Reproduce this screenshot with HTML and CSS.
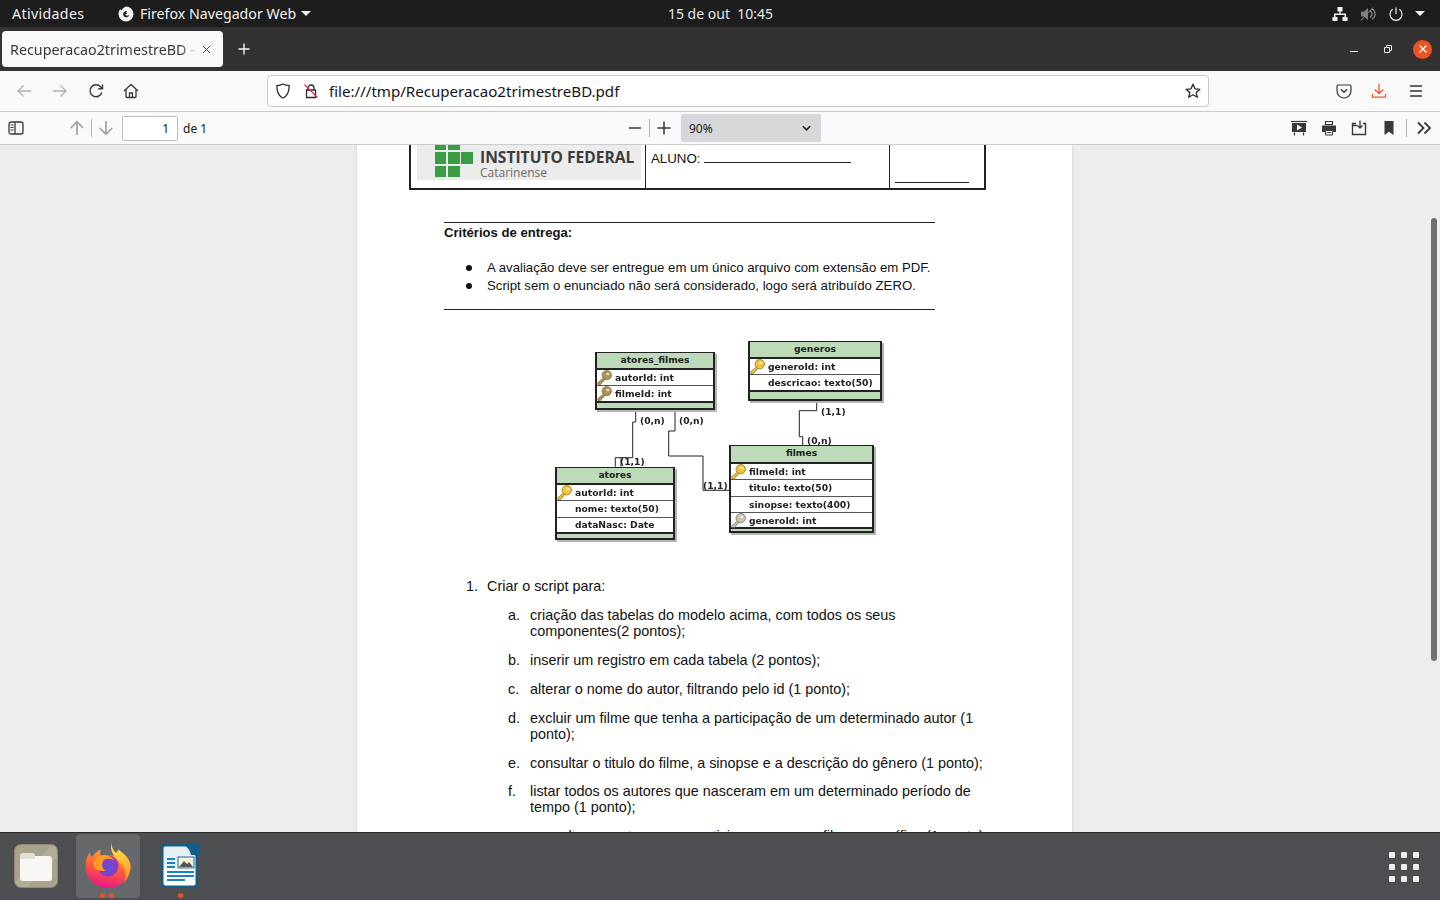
FILE: index.html
```html
<!DOCTYPE html>
<html lang="pt-BR">
<head>
<meta charset="utf-8">
<title>Recuperacao2trimestreBD</title>
<link rel="stylesheet" href="styles.css">
</head>
<body>
<svg class="defs" width="0" height="0" aria-hidden="true">
  <symbol id="key" viewBox="0 0 16 16">
    <path d="M7 8.500 .9 13.300v2.200h3l1-1.200.2-1.300 1.400-.2.3-1.400 2.300-1.300z" fill="currentColor" stroke="#6f5a1c" stroke-width=".6"/>
    <circle cx="10.400" cy="5.500" r="5" fill="currentColor" stroke="#8a7020" stroke-width=".8"/>
    <ellipse cx="11.600" cy="4.300" rx="1.800" ry="1.400" fill="#fff" opacity=".7"/>
  </symbol>
</svg>

<header class="topbar">
  <span class="activities">Atividades</span>
  <span class="appmenu">
    <svg class="ico-app" viewBox="0 0 16 16"><path d="M8 .5a7.500 7.500 0 1 1-7.500 7.500C.5 6 1.300 4.300 2.500 3c0 .8.3 1.300.8 1.600C4.200 2.800 5.800 1.200 8 .5zM8.800 5C7 4.800 5.200 6.200 5.200 8.200c0 1.700 1.400 3 3.100 3 1.500 0 2.700-1 3-2.400-.6.600-1.400 1-2.300.8-.9-.1-1.600-.8-1.700-1.700.7.300 1.400.3 2-.1C8.800 7.500 8.200 7 8.200 6.500c.1-.6.400-1 .6-1.500z" fill="#f2f2f2" fill-rule="evenodd"/></svg>
    <span>Firefox Navegador Web</span>
    <i class="caret"></i>
  </span>
  <time class="clock">15 de out&nbsp;&nbsp;10:45</time>
  <span class="tray">
    <svg class="ico-tray" viewBox="0 0 16 16"><path d="M5.500 1h5v4.500H8.700v2H14V11h1.500v4h-5v-4h2V9h-9v2h2v4h-5v-4H2V7.500h5.300v-2H5.500z" fill="#f2f2f2"/></svg>
    <svg class="ico-tray" viewBox="0 0 16 16"><path d="M1 5.500h3L8 2v12l-4-3.500H1z" fill="#7d7d7d"/><path d="M10 4.500c1.300 1 2 2.200 2 3.500s-.7 2.500-2 3.500M12 2.800C14 4 15 6 15 8s-1 4-3 5.200" fill="none" stroke="#8b8b8b" stroke-width="1.200"/><path d="M1 14.500 13 1.500" stroke="#8b8b8b" stroke-width="1"/></svg>
    <svg class="ico-tray" viewBox="0 0 16 16"><path d="M8 1.500v6.500M4.700 3.300a6 6 0 1 0 6.600 0" fill="none" stroke="#f2f2f2" stroke-width="1.200"/></svg>
    <i class="caret"></i>
  </span>
</header>

<div class="tabstrip">
  <div class="tab">
    <span class="tab-title">Recuperacao2trimestreBD - PDF.js</span>
    <svg class="tab-close" viewBox="0 0 10 10"><path d="M1 1l8 8M9 1l-8 8" stroke="#333" stroke-width="1"/></svg>
  </div>
  <svg class="newtab" viewBox="0 0 12 12"><path d="M6 .5v11M.5 6h11" stroke="#f4f4f4" stroke-width="1.400"/></svg>
  <div class="winctl">
    <svg class="win-min" viewBox="0 0 10 10"><path d="M1 7.500h8" stroke="#eee" stroke-width="1"/></svg>
    <svg class="win-max" viewBox="0 0 10 10"><path d="M1.500 3.500h5v5h-5zM3.500 3V1.500h5v5H7" fill="none" stroke="#eee" stroke-width="1"/></svg>
    <span class="win-close"><svg viewBox="0 0 10 10"><path d="M1.500 1.500l7 7M8.500 1.500l-7 7" stroke="#fff" stroke-width="1.300"/></svg></span>
  </div>
</div>

<nav class="navbar">
  <svg class="nav-ico nav-back" viewBox="0 0 16 16"><path d="M15 8H2M7.500 2.500 2 8l5.500 5.500" fill="none" stroke="#b1b1b3" stroke-width="1.300"/></svg>
  <svg class="nav-ico nav-next" viewBox="0 0 16 16"><path d="M1 8h13M8.500 2.500 14 8l-5.500 5.500" fill="none" stroke="#b1b1b3" stroke-width="1.300"/></svg>
  <svg class="nav-ico nav-next" viewBox="0 0 16 16"><path d="M13.800 9.500A6 6 0 1 1 12.300 3.500L14 5.500M14.500 1.500v4.200h-4.200" fill="none" stroke="#38383d" stroke-width="1.400"/></svg>
  <svg class="nav-ico nav-home" viewBox="0 0 16 16"><path d="M1 8 8 1.500 15 8M3 6.500v7.300a.7.7 0 0 0 .7.700h8.600a.7.7 0 0 0 .7-.7V6.500M6.500 14.500V10h3v4.500" fill="none" stroke="#38383d" stroke-width="1.300"/></svg>
  <div class="urlbar">
    <svg class="url-shield" viewBox="0 0 16 16"><path d="M8 1c2 1 4.200 1.500 6.200 1.700C14.200 9 12.500 13 8 15 3.500 13 1.800 9 1.800 2.700 3.800 2.500 6 2 8 1z" fill="none" stroke="#2a2a2e" stroke-width="1.300"/></svg>
    <svg class="url-lock" viewBox="0 0 16 16"><path d="M5 7V5a3 3 0 0 1 6 0v2M3.500 7h9v7.500h-9z" fill="none" stroke="#2a2a2e" stroke-width="1.300"/><path d="M1.500 1.500l13 13" stroke="#e22850" stroke-width="1.100"/></svg>
    <span class="url-text">file:///tmp/Recuperacao2trimestreBD.pdf</span>
    <svg class="url-star" viewBox="0 0 16 16"><path d="M8 1.300 10 5.800l4.900.5-3.700 3.200 1.100 4.800L8 11.800l-4.300 2.500 1.100-4.800L1.100 6.300 6 5.800z" fill="none" stroke="#2a2a2e" stroke-width="1.300" stroke-linejoin="round"/></svg>
  </div>
  <svg class="nav-ico nav-pocket" viewBox="0 0 16 16"><path d="M2.200 2h11.600c.7 0 1.200.5 1.200 1.200V8a7 7 0 0 1-14 0V3.200C1 2.500 1.500 2 2.200 2z" fill="none" stroke="#38383d" stroke-width="1.200"/><path d="M4.800 6.300 8 9.300l3.200-3" fill="none" stroke="#38383d" stroke-width="1.400"/></svg>
  <svg class="nav-ico nav-dl" viewBox="0 0 16 16"><path d="M8 1v9.500M3.800 6.500 8 10.700l4.200-4.200M1.500 11v3.200h13V11" fill="none" stroke="#f0562a" stroke-width="1.300"/></svg>
  <svg class="nav-ico nav-menu" viewBox="0 0 16 16"><path d="M2 3h12M2 8h12M2 13h12" stroke="#38383d" stroke-width="1.300"/></svg>
</nav>

<div class="pdfbar">
  <div class="pdf-left">
    <svg class="pdf-ico pdf-side" viewBox="0 0 16 16"><rect x="1" y="2" width="14" height="12" rx="2" fill="none" stroke="#38383d" stroke-width="1.300"/><path d="M7 2v12" stroke="#38383d" stroke-width="1.300"/><path d="M2.500 5h3M2.500 7.500h3M2.500 10h3" stroke="#38383d"/></svg>
    <svg class="pdf-ico pdf-up" viewBox="0 0 16 16"><path d="M8 15V2M1.800 8 8 1.800 14.200 8" fill="none" stroke="#a3a3a5" stroke-width="1.700"/></svg>
    <i class="pdf-sep"></i>
    <svg class="pdf-ico pdf-down" viewBox="0 0 16 16"><path d="M8 1v13M1.800 8 8 14.200 14.200 8" fill="none" stroke="#a3a3a5" stroke-width="1.700"/></svg>
    <span class="pageinput">1</span>
    <span class="pagecount">de 1</span>
  </div>
  <div class="pdf-center">
    <svg class="pdf-ico" viewBox="0 0 16 16"><path d="M2 8h12" stroke="#38383d" stroke-width="1.500"/></svg>
    <i class="pdf-sep"></i>
    <svg class="pdf-ico" viewBox="0 0 16 16"><path d="M1.500 8h13M8 1.500v13" stroke="#38383d" stroke-width="1.500"/></svg>
    <span class="zoomsel"><span>90%</span><svg class="zoom-chev" viewBox="0 0 10 6"><path d="M1 1l4 4 4-4" fill="none" stroke="#222" stroke-width="1.800"/></svg></span>
  </div>
  <div class="pdf-right">
    <svg class="pdf-ico" viewBox="0 0 16 16"><path d="M0 1.500h16" stroke="#38383d" stroke-width="1.200"/><path d="M1 3h14v9H1z" fill="#38383d"/><path d="M6 4.500l5 3-5 3z" fill="#f9f9fa"/><path d="M3.500 12.500v3M12.500 12.500v3" stroke="#38383d" stroke-width="1.200"/></svg>
    <svg class="pdf-ico" viewBox="0 0 16 16"><path d="M4.500 1.500h7v3h-7z" fill="none" stroke="#38383d" stroke-width="1.200"/><path d="M1 5.500h14V12h-3v-2H4v2H1z" fill="#38383d"/><path d="M4.500 10.500h7v4.500h-7z" fill="#f9f9fa" stroke="#38383d"/><path d="M6 12.500h4" stroke="#38383d"/></svg>
    <svg class="pdf-ico" viewBox="0 0 16 16"><path d="M5 3.500H1.500v11h13v-11H12M1.500 5.500H6" fill="none" stroke="#38383d" stroke-width="1.400"/><path d="M9 .5v7.500M6.500 5.500 9 8l2.500-2.500" fill="none" stroke="#38383d" stroke-width="1.300"/></svg>
    <svg class="pdf-ico" viewBox="0 0 16 16"><path d="M3.500 1h9v14L8 11.800 3.500 15z" fill="#38383d"/></svg>
    <i class="pdf-sep pdf-sep-r"></i>
    <svg class="pdf-ico pdf-more" viewBox="0 0 16 16"><path d="M2 2.500 7.500 8 2 13.500M8.500 2.500 14 8l-5.500 5.500" fill="none" stroke="#38383d" stroke-width="1.800"/></svg>
  </div>
</div>

<main class="viewer">
  <article class="paper">
    <div class="doc-head">
      <div class="cell-logo">
        <div class="logo">
          <div class="logo-mark">
            <i class="sq"></i><i class="sq"></i><i class="sq-gap"></i>
            <i class="sq"></i><i class="sq"></i><i class="sq"></i>
            <i class="sq"></i><i class="sq"></i>
          </div>
          <div class="logo-text">
            <strong>INSTITUTO FEDERAL</strong>
            <span>Catarinense</span>
          </div>
        </div>
      </div>
      <div class="cell-name">ALUNO: <i class="blank"></i></div>
      <div class="cell-grade"><i></i></div>
    </div>

    <section class="criteria">
      <h2>Critérios de entrega:</h2>
      <ul>
        <li>A avaliação deve ser entregue em um único arquivo com extensão em PDF.</li>
        <li>Script sem o enunciado não será considerado, logo será atribuído ZERO.</li>
      </ul>
    </section>

    <div class="diagram">
      <svg class="wires" viewBox="0 0 715 265">
        <path d="M278.700 101V112H275.700V147.700H258.300V156.700M264 147.700V156.700"/>
        <path d="M318 101V121H311.700V146H346V180.300H373"/>
        <path d="M459.700 93V100.700H442.300V126.700H445.700V135.700"/>
      </svg>

      <div class="er er-af">
        <div class="er-head">atores_filmes</div>
        <div class="er-row"><svg class="k k-fk"><use href="#key"/></svg>autorId: int</div>
        <div class="er-row"><svg class="k k-fk"><use href="#key"/></svg>filmeId: int</div>
        <div class="er-foot"></div>
      </div>
      <div class="er er-ge">
        <div class="er-head">generos</div>
        <div class="er-row"><svg class="k k-pk"><use href="#key"/></svg>generoId: int</div>
        <div class="er-row"><svg class="k"></svg>descricao: texto(50)</div>
        <div class="er-foot"></div>
      </div>
      <div class="er er-at">
        <div class="er-head">atores</div>
        <div class="er-row"><svg class="k k-pk"><use href="#key"/></svg>autorId: int</div>
        <div class="er-row"><svg class="k"></svg>nome: texto(50)</div>
        <div class="er-row"><svg class="k"></svg>dataNasc: Date</div>
        <div class="er-foot"></div>
      </div>
      <div class="er er-fi">
        <div class="er-head">filmes</div>
        <div class="er-row"><svg class="k k-pk"><use href="#key"/></svg>filmeId: int</div>
        <div class="er-row"><svg class="k"></svg>titulo: texto(50)</div>
        <div class="er-row"><svg class="k"></svg>sinopse: texto(400)</div>
        <div class="er-row"><svg class="k k-gr"><use href="#key"/></svg>generoId: int</div>
        <div class="er-foot"></div>
      </div>

      <span class="card c1">(0,n)</span>
      <span class="card c2">(0,n)</span>
      <span class="card c3">(1,1)</span>
      <span class="card c4">(0,n)</span>
      <span class="card c5">(1,1)</span>
      <span class="card c6">(1,1)</span>
    </div>

    <div class="tasks">
      <div class="task-main"><span class="m1">1.</span><span>Criar o script para:</span></div>
      <ol class="sub">
        <li><span class="m2">a.</span><span>criação das tabelas do modelo acima, com todos os seus<br>componentes(2 pontos);</span></li>
        <li><span class="m2">b.</span><span>inserir um registro em cada tabela (2 pontos);</span></li>
        <li><span class="m2">c.</span><span>alterar o nome do autor, filtrando pelo id (1 ponto);</span></li>
        <li><span class="m2">d.</span><span>excluir um filme que tenha a participação de um determinado autor (1<br>ponto);</span></li>
        <li><span class="m2">e.</span><span>consultar o titulo do filme, a sinopse e a descrição do gênero (1 ponto);</span></li>
        <li><span class="m2">f.</span><span>listar todos os autores que nasceram em um determinado período de<br>tempo (1 ponto);</span></li>
        <li><span class="m2">g.</span><span>consultar os autores que participaram em um filme específico (1 ponto);</span></li>
      </ol>
    </div>
  </article>
  <div class="scrollthumb"></div>
</main>

<footer class="dock">
  <div class="dock-slot">
    <span class="files-tile"><i class="folder"></i></span>
  </div>
  <div class="dock-slot dock-active">
    <svg class="dock-ff" viewBox="0 0 46 46">
      <defs>
        <linearGradient id="ffa" x1="0.700" y1="0" x2="0.400" y2="1"><stop offset="0" stop-color="#ffb02e"/><stop offset=".5" stop-color="#ff5f36"/><stop offset="1" stop-color="#e8158c"/></linearGradient>
        <linearGradient id="ffb" x1="0.400" y1="0" x2="0.600" y2="1"><stop offset="0" stop-color="#ffe94d"/><stop offset="1" stop-color="#ff9320"/></linearGradient>
        <radialGradient id="ffc" cx=".55" cy=".6" r=".6"><stop offset="0" stop-color="#5a55d8"/><stop offset="1" stop-color="#a32ec4"/></radialGradient>
      </defs>
      <path d="M23 46C10.500 46 .5 36.500.5 24.500.5 19 2 14 4.500 10.500c.5 2.500 1.500 3.800 3 4.500 1.500-3 4.500-6 8.500-7.500-1 2.500-1 4.500 0 6h13c8 0 16.500 2 16.500 10.500C45.500 36.500 35.500 46 23 46z" fill="url(#ffa)"/>
      <path d="M27 0c-1 4 .5 7 2.500 9.500 1.500 2 3.500.5 3.500-2 6 4 12.500 9 12.500 17.500 0 6-2.500 11-6.500 15 2-5 2.500-11-1-16C33.500 17 23 12 27 0z" fill="url(#ffb)"/>
      <circle cx="23" cy="24" r="10.500" fill="url(#ffc)"/>
      <path d="M8 22c1-5 6.500-9.500 12-9 4 .4 7 2 9.500 5-3.500-1.500-8-1.800-10.500 0-3 3-2.500 8.500 2 11-7 .5-12-1.500-13-7z" fill="#ff9a24"/>
    </svg>
    <i class="run-dot"></i><i class="run-dot"></i>
  </div>
  <div class="dock-slot">
    <svg class="dock-lo" viewBox="0 0 38 46">
      <path d="M3.500 1H26l11 11v29.500a3.500 3.500 0 0 1-3.500 3.500h-30A3.500 3.500 0 0 1 0 41.500v-37A3.500 3.500 0 0 1 3.500 1z" fill="#125e88"/>
      <path d="M4 3.500h21l9.500 9.500v12H2.500V5A1.500 1.500 0 0 1 4 3.500z" fill="#e6f0f6"/>
      <path d="M2.500 25h32v15.500a2 2 0 0 1-2 2H4.500a2 2 0 0 1-2-2z" fill="#fff"/>
      <path d="M26 0h12v12H30z" fill="#125e88"/>
      <path d="M6 15h8v2H6zM6 19h8v2H6zM6 23h8v2H6zM6 28h27v2H6zM6 32h27v2H6zM6 36h18v2H6z" fill="#1a82bd"/>
      <rect x="17" y="14" width="16" height="11" fill="#f6f3d6" stroke="#1a6a98"/>
      <path d="M18 24l5-6 3 3 2-2 4 5z" fill="#555"/>
    </svg>
    <i class="run-dot"></i>
  </div>
  <div class="appgrid">
    <i></i><i></i><i></i><i></i><i></i><i></i><i></i><i></i><i></i>
  </div>
</footer>
</body>
</html>
```

FILE: styles.css
```css
* { box-sizing: border-box; }
html, body { margin: 0; height: 100%; }
body {
  width: 1440px;
  height: 900px;
  overflow: hidden;
  display: flex;
  flex-direction: column;
  font-family: "Noto Sans", "Open Sans", sans-serif;
  background: #ededf0;
}
.defs { position: absolute; }

/* GNOME top bar */
.topbar {
  height: 27px;
  flex: none;
  background: #1d1d1d;
  color: #f0f0f0;
  font-size: 14.200px;
  display: flex;
  align-items: center;
  padding-left: 12px;
}
.activities { width: 106px; letter-spacing: .35px; }
.appmenu { display: flex; align-items: center; width: 490px; }
.ico-app { width: 16px; height: 16px; margin-right: 6px; }
.caret {
  width: 0; height: 0;
  border-left: 5px solid transparent;
  border-right: 5px solid transparent;
  border-top: 5px solid #f2f2f2;
  margin-left: 5px;
}
.clock { width: 225px; font-size: 14px; text-align: center; color: #e6e6e6; }
.tray { margin-left: auto; display: flex; align-items: center; gap: 12px; padding-right: 15px; }
.tray .caret { margin-left: -1px; }
.ico-tray { width: 16px; height: 16px; }

/* Tabs */
.tabstrip {
  height: 44px;
  flex: none;
  background: #333131;
  display: flex;
  align-items: center;
  padding-left: 2px;
}
.tab {
  width: 221px;
  height: 36px;
  background: #f9f9fa;
  border-radius: 4px;
  display: flex;
  align-items: center;
  padding-left: 8px;
  font-size: 14.300px;
  color: #38383d;
}
.tab-title {
  width: 188px;
  overflow: hidden;
  white-space: nowrap;
  -webkit-mask-image: linear-gradient(to right, #000 170px, transparent 188px);
  mask-image: linear-gradient(to right, #000 170px, transparent 188px);
}
.tab-close { width: 9px; height: 9px; margin-left: 4px; }
.newtab { width: 12px; height: 12px; margin-left: 15px; }
.winctl { margin-left: auto; display: flex; align-items: center; padding-right: 8px; }
.win-min { width: 10px; height: 10px; }
.win-max { width: 10px; height: 10px; margin-left: 24px; }
.win-close {
  width: 19px; height: 19px;
  border-radius: 50%;
  background: #e95420;
  margin-left: 20px;
  display: flex; align-items: center; justify-content: center;
}
.win-close svg { width: 10px; height: 10px; }

/* Navigation */
.navbar {
  height: 41px;
  flex: none;
  background: #f9f9fa;
  border-bottom: 1px solid #cccccc;
  display: flex;
  align-items: center;
}
.nav-ico { width: 16px; height: 16px; flex: none; }
.nav-back { margin-left: 16px; }
.nav-next { margin-left: 20px; }
.nav-home { margin-left: 19px; }
.urlbar {
  width: 942px;
  height: 32px;
  margin-left: 128px;
  background: #fff;
  border: 1px solid #c8c8c8;
  border-radius: 4px;
  display: flex;
  align-items: center;
  padding: 0 7px;
  font-size: 15.100px;
  color: #15141a;
}
.url-shield { width: 16px; height: 16px; }
.url-lock { width: 16px; height: 16px; margin-left: 12px; }
.url-text { margin-left: 10px; }
.url-star { width: 16px; height: 16px; margin-left: auto; }
.nav-pocket { margin-left: 127px; }
.nav-dl { margin-left: 19px; }
.nav-menu { margin-left: 21px; }

/* PDF toolbar */
.pdfbar {
  height: 33px;
  flex: none;
  background: #f9f9fa;
  border-bottom: 1px solid #cccccc;
  display: flex;
  align-items: center;
  font-size: 12px;
  color: #18181a;
}
.pdf-ico { width: 16px; height: 16px; flex: none; }
.pdf-sep { width: 1px; height: 18px; background: #b8b8ba; flex: none; }
.pdf-left { width: 627px; display: flex; align-items: center; }
.pdf-side { margin-left: 8px; }
.pdf-up { margin-left: 45px; margin-right: 6px; }
.pdf-down { margin-left: 6px; }
.pageinput {
  width: 56px; height: 25px;
  margin-left: 8px;
  background: #fff;
  border: 1px solid #bdbdbd;
  border-radius: 2px;
  text-align: right;
  padding-right: 8px;
  line-height: 24px;
}
.pagecount { margin-left: 5px; }
.pdf-center { display: flex; align-items: center; gap: 6px; }
.zoomsel {
  width: 140px; height: 28px;
  margin-left: 3px;
  background: #d7d7db;
  border-radius: 2px;
  display: flex;
  align-items: center;
  justify-content: space-between;
  padding: 0 10px 0 8px;
}
.zoom-chev { width: 9px; height: 6px; }
.pdf-right { margin-left: auto; display: flex; align-items: center; gap: 14px; padding-right: 8px; }
.pdf-sep-r { margin-left: -5px; margin-right: -5px; }

/* Viewer */
.viewer {
  flex: 1;
  min-height: 0;
  overflow: hidden;
  position: relative;
  background: #ededf0;
  display: flex;
  justify-content: center;
  padding-right: 11px;
}
.scrollthumb {
  position: absolute;
  left: 1431px; top: 73px;
  width: 6px; height: 443px;
  border-radius: 3px;
  background: #707074;
}
.paper {
  width: 715px;
  height: 1000px;
  flex: none;
  background: #fff;
  box-shadow: 0 0 4px rgba(0,0,0,.12);
  font-family: "Liberation Sans", Arial, sans-serif;
  font-size: 13.200px;
  line-height: 16px;
  color: #111;
}

.doc-head {
  margin-left: 52px;
  width: 577px;
  height: 45px;
  border: solid #222;
  border-width: 0 2px 2px;
  display: flex;
}
.cell-logo { width: 234px; padding-left: 6px; }
.logo {
  width: 224px; height: 35px;
  background: #ececec;
  display: flex;
}
.logo-mark {
  width: 38px;
  flex: none;
  margin-left: 18px;
  margin-right: 7px;
  display: grid;
  grid-template-columns: 11px 12px 12px;
  grid-template-rows: 5px 11.500px 11px;
  column-gap: 1.500px;
  row-gap: 2px;
  align-content: start;
}
.sq { background: #3a9c43; }
.logo-text { display: flex; flex-direction: column; padding-top: 4px; color: #3c3c3c; font-family: "Open Sans", sans-serif; white-space: nowrap; }
.logo-text strong { font-size: 15.600px; line-height: 17px; }
.logo-text span { font-size: 12px; line-height: 13px; color: #6a6a6a; }
.cell-name {
  width: 244px;
  border-left: 1px solid #222;
  padding: 6px 0 0 5px;
  font-size: 13.300px;
}
.blank { display: inline-block; width: 147px; height: 11px; border-bottom: 1px solid #222; vertical-align: baseline; }
.cell-grade { flex: 1; border-left: 1px solid #222; display: flex; align-items: flex-end; padding: 0 0 5px 5px; }
.cell-grade i { display: block; width: 74px; border-bottom: 1px solid #222; }

.criteria {
  margin: 32px 0 0 87px;
  width: 491px;
  height: 88px;
  border-top: 1px solid #222;
  border-bottom: 1px solid #222;
}
.criteria h2 { margin: 2px 0 0; font-size: 13.100px; line-height: 16px; font-weight: 700; }
.criteria ul { list-style: none; margin: 19px 0 0; padding: 0 0 0 22px; }
.criteria li { margin-bottom: 2px; display: flex; align-items: center; }
.criteria li::before {
  content: "";
  width: 6px; height: 6px;
  border-radius: 50%;
  background: #111;
  margin-right: 15px;
  flex: none;
}

.diagram { position: relative; height: 268px; }
.wires { position: absolute; left: 0; top: 0; width: 715px; height: 265px; }
.wires path { fill: none; stroke: #222; stroke-width: 1; }

.er {
  position: absolute;
  border: 2px solid #222;
  border-top-width: 1px;
  box-shadow: 2px 2px 0 #b5b5b5;
  background: #fff;
  font-family: "DejaVu Sans", sans-serif;
  font-weight: 700;
  font-size: 9.200px;
  line-height: 15px;
  color: #222;
  filter: blur(.25px);
}
.er-af { left: 238px; top: 42px; width: 120px; }
.er-ge { left: 391px; top: 31px; width: 134px; }
.er-at { left: 198px; top: 157px; width: 120px; }
.er-fi { left: 372px; top: 135px; width: 145px; }
.er-head { height: 17px; background: #bddbb9; text-align: center; border-bottom: 2px solid #222; line-height: 14px; }
.er-fi .er-head { height: 18px; }
.er-row { height: 16.300px; display: flex; align-items: center; white-space: nowrap; border-bottom: 1px solid #555; }
.er-row:nth-last-child(2) { border-bottom: 2px solid #222; }
.er-foot { height: 5px; background: #bddbb9; }
.er-ge .er-foot { height: 7px; }
.er-at .er-foot { height: 4px; }
.er-fi .er-foot { height: 2px; }
.k { width: 15px; height: 15px; margin: 0 3px 0 0; flex: none; }
.k-pk { color: #f3c235; }
.k-fk { color: #a89458; }
.k-gr { color: #c4c4c4; }

.card {
  position: absolute;
  font-family: "DejaVu Sans", sans-serif;
  font-weight: 700;
  font-size: 9.200px;
  line-height: 12px;
  color: #222;
  filter: blur(.25px);
  white-space: nowrap;
}
.c1 { left: 283px; top: 105px; }
.c2 { left: 322px; top: 105px; }
.c3 { left: 464px; top: 96px; }
.c4 { left: 450px; top: 125px; }
.c5 { left: 263px; top: 146px; }
.c6 { left: 346px; top: 170px; }

.tasks { padding-left: 109px; width: 640px; font-size: 14.400px; }
.task-main { display: flex; margin-bottom: 13px; }
.m1 { width: 21px; flex: none; }
.sub { list-style: none; margin: 0; padding: 0 0 0 42px; }
.sub li { display: flex; margin-bottom: 12.900px; white-space: nowrap; }
.m2 { width: 22px; flex: none; }

/* Dock */
.dock {
  height: 68px;
  flex: none;
  position: relative;
  z-index: 2;
  background: #4c4e52;
  border-top: 1px solid #2b2b2b;
  display: flex;
  align-items: flex-start;
  padding: 1px 4px 0;
}
.dock-slot {
  width: 64px; height: 64px;
  margin-right: 8px;
  border-radius: 4px;
  position: relative;
  display: flex;
  align-items: center;
  justify-content: center;
}
.dock-active { background: #66686b; }
.files-tile {
  width: 44px; height: 44px;
  border-radius: 7px;
  background: linear-gradient(135deg, #a9a28d 0 45%, #b2ac98 45% 65%, #a9a28d 65%);
  border: 1px solid #8f8975;
  display: flex; align-items: center; justify-content: center;
}
.folder {
  position: relative;
  width: 32px; height: 25px;
  margin-top: 4px;
  border-radius: 3px;
  background: #f8f7f5;
}
.folder::before {
  content: "";
  position: absolute;
  left: 0; top: -3px;
  width: 15px; height: 6px;
  border-radius: 3px 3px 0 0;
  background: #e2ded8;
}
.dock-ff { width: 46px; height: 46px; margin-top: -2px; }
.dock-lo { width: 38px; height: 46px; }
.run-dot {
  position: absolute;
  left: 24px; top: 59px;
  width: 5px; height: 5px;
  border-radius: 50%;
  background: #e95420;
}
.dock-active .run-dot:last-child { left: 33px; }
.dock-slot:nth-child(3) .run-dot { left: 29.500px; }
.appgrid {
  margin-left: auto;
  margin-right: 17px;
  margin-top: 18px;
  display: grid;
  grid-template-columns: repeat(3, 6px);
  grid-auto-rows: 6px;
  gap: 6px;
}
.appgrid i { background: #eeeeec; border-radius: 1px; }
```
